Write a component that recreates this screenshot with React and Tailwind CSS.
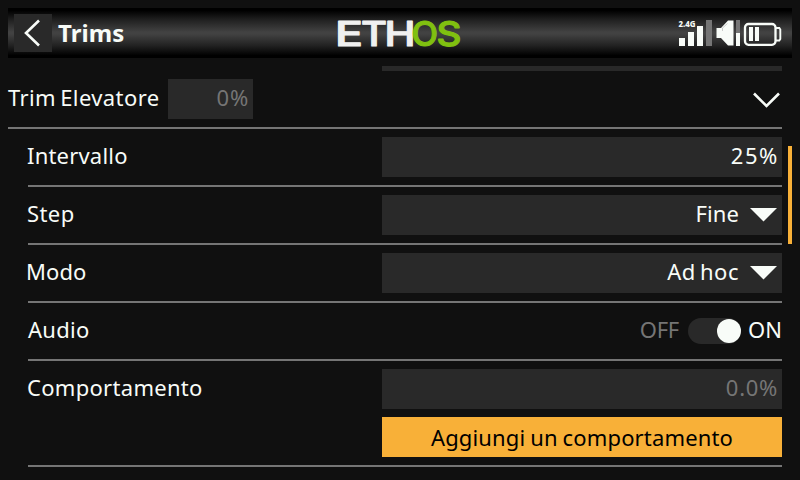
function Header() {
  return (
    <header className="mx-2 mt-2 flex h-[50px] shrink-0 items-center bg-[linear-gradient(to_bottom,#000_0%,#000_5%,#222_25%,#424242_48%,#424242_52%,#222_75%,#000_95%,#000_100%)]">
      <button className="ml-1.5 h-[38px] w-[38px] bg-[#292929]" aria-label="Back">
        <svg viewBox="0 0 38 38" className="h-full w-full" fill="none" stroke="#f8fcf8" strokeWidth="2.6">
          <path d="M25 6.5 12 19 25 31.500" />
        </svg>
      </button>
      <h1 className="ml-1.5 w-[272px] text-[24px] leading-[50px] font-bold tracking-[0.1px]">Trims</h1>
      <svg className="h-[50px] w-[136px]" viewBox="330 8 136 50" fontFamily="Inter, sans-serif" fontSize="34.500" fontWeight="500" fill="#f0f0f0" stroke="#f0f0f0" strokeWidth="1.100" strokeLinejoin="round">
        <text x="335" y="45.500" textLength="28" lengthAdjust="spacingAndGlyphs">E</text>
        <text x="361" y="45.500" textLength="26" lengthAdjust="spacingAndGlyphs">T</text>
        <text x="384.500" y="45.500" textLength="31" lengthAdjust="spacingAndGlyphs">H</text>
        <text x="411.500" y="45.500" textLength="26.500" lengthAdjust="spacingAndGlyphs" fill="#80c010" stroke="#80c010">O</text>
        <text x="436.500" y="45.500" textLength="25" lengthAdjust="spacingAndGlyphs" fill="#80c010" stroke="#80c010">S</text>
      </svg>
      <svg className="ml-auto h-[50px] w-[120px]" viewBox="672 8 120 50" fill="#f8fcf8">
        <text x="678.5" y="26.500" fontFamily="Noto Sans, sans-serif" fontSize="8.500" fontWeight="800" textLength="17" lengthAdjust="spacingAndGlyphs">2.4G</text>
        <rect x="679" y="38" width="6" height="8" />
        <rect x="688" y="32" width="6" height="14" />
        <rect x="697" y="26" width="6" height="20" />
        <rect x="706" y="20" width="6" height="26" fill="#757575" />
        <path d="M716.5 28h4.5l7-7.5h5.500v25H728l-7-7.500h-4.500z" />
        <path d="M722.5 31v-3l5-4.500" fill="none" stroke="#b8b8b8" strokeWidth="0.7" />
        <rect x="736" y="20" width="4" height="13" fill="#757575" />
        <rect x="736" y="33" width="4" height="13" />
        <rect x="745" y="24" width="30.500" height="20.800" rx="3.500" fill="none" stroke="#f8fcf8" strokeWidth="2.300" />
        <path d="M776 28h3.300l1 1.500v9.500l-1 1.500H776" fill="none" stroke="#f8fcf8" strokeWidth="1.900" />
        <rect x="749" y="27" width="4" height="14" />
        <rect x="755" y="27" width="4" height="14" />
      </svg>
    </header>
  );
}

function Row({ label, labelClass = "", children }) {
  return (
    <div className="ml-7 flex h-[58px] items-start justify-between border-b-2 border-[#757575] pt-2">
      <span className={`leading-[37px] ${labelClass}`}>{label}</span>
      {children}
    </div>
  );
}

function Select({ value, valueClass }) {
  return (
    <div className="flex h-10 w-[400px] items-start justify-end bg-[#292929] pr-[5px]">
      <span className={`leading-[37px] ${valueClass}`}>{value}</span>
      <svg className="ml-[11px] mt-[13px] h-[14px] w-[27px]" viewBox="0 0 27 14" fill="#f8fcf8">
        <path d="M0 0h27L13.500 13.500z" />
      </svg>
    </div>
  );
}

export default function App() {
  return (
    <div className="relative flex h-[480px] w-[800px] flex-col overflow-hidden bg-[#101010] font-['Noto_Sans',sans-serif] text-[22px] text-[#f8fcf8] whitespace-nowrap">
      <Header />
      <main className="mr-[18px] mt-2 flex flex-col">
        <div className="h-[5px] w-[400px] self-end bg-[#292929]" />
        <div className="ml-2 flex h-[58px] items-start border-b-2 border-[#757575] pt-2">
          <span className="w-40 leading-[37px] tracking-[0.4px] [word-spacing:-2px]">Trim Elevatore</span>
          <div className="h-10 w-[85px] bg-[#292929] pr-1 text-right leading-[37px] tracking-[0.8px] text-[#757575]">0%</div>
          <svg className="ml-auto mt-[13px] h-4 w-[30px]" viewBox="0 0 30 16" fill="none" stroke="#f8fcf8" strokeWidth="2.600">
            <path d="M2 1.500 14.500 14 27 1.500" />
          </svg>
        </div>
        <Row label="Intervallo" labelClass="-ml-px tracking-[0.2px]">
          <div className="h-10 w-[400px] bg-[#292929] pr-[3px] text-right leading-[37px] tracking-[1.6px]">25%</div>
        </Row>
        <Row label="Step" labelClass="-ml-px tracking-[0.4px]">
          <Select value="Fine" valueClass="tracking-[0.1px]" />
        </Row>
        <Row label="Modo" labelClass="-ml-0.5 tracking-[0.1px]">
          <Select value="Ad hoc" valueClass="tracking-[0.5px] [word-spacing:-2px]" />
        </Row>
        <Row label="Audio" labelClass="tracking-[0.3px]">
          <div className="flex h-10 items-start">
            <span className="leading-[37px] tracking-[-0.2px] text-[#757575]">OFF</span>
            <span className="ml-[9px] mt-[7px] flex h-[26px] w-[53px] items-center justify-end rounded-full bg-[#292929]">
              <span className="h-6 w-6 rounded-full bg-[#f8fcf8]" />
            </span>
            <span className="ml-[7px] leading-[37px]">ON</span>
          </div>
        </Row>
        <div className="ml-7 flex h-[106px] items-start justify-between border-b-2 border-[#757575] pt-2">
          <span className="-ml-px leading-[37px] tracking-[0.3px]">Comportamento</span>
          <div className="flex w-[400px] flex-col gap-2">
            <div className="h-10 bg-[#292929] pr-1 text-right leading-[37px] tracking-[0.7px] text-[#757575]">0.0%</div>
            <button className="h-10 bg-[#f8b038] leading-[40px] tracking-[0.15px] text-black [word-spacing:-1px]">Aggiungi un comportamento</button>
          </div>
        </div>
      </main>
      <div className="absolute left-[788px] top-[146px] h-[98px] w-1 bg-[#f8b038]" />
    </div>
  );
}
